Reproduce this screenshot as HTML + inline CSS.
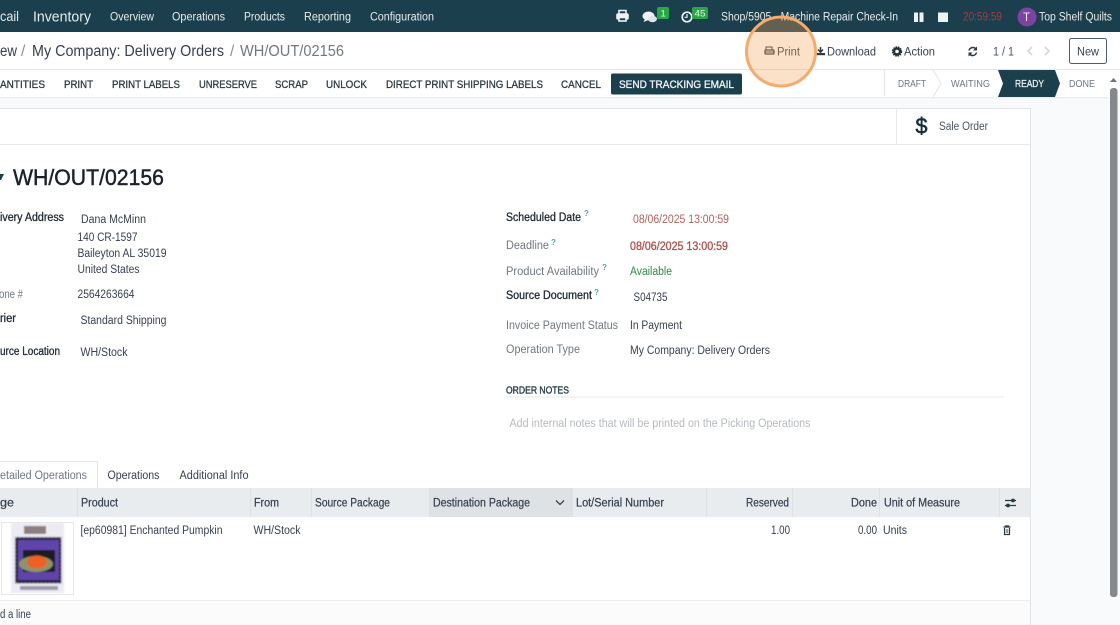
<!DOCTYPE html>
<html><head><meta charset="utf-8"><style>
html,body{margin:0;padding:0;width:1120px;height:625px;overflow:hidden;background:#fff}
svg{display:block;font-family:"Liberation Sans",sans-serif;filter:blur(.3px)}
text{font-size:11.5px;fill:#374151}
.n{fill:#e6ecee}
.b{fill:#2b3a42;stroke:#2b3a42;stroke-width:.3;font-size:11.2px}
.l{fill:#6f7880}
.s{fill:#1f2933;stroke:#1f2933;stroke-width:.3}
.h{fill:#374151;stroke:#374151;stroke-width:.22}
.q{fill:#5aa0ab;font-size:8px;font-weight:bold}
</style></head><body>
<svg width="1120" height="625" viewBox="0 0 1120 625" xmlns="http://www.w3.org/2000/svg">
<defs><filter id="soft" x="-5%" y="-5%" width="110%" height="110%"><feGaussianBlur stdDeviation=".7"/></filter></defs>
<rect width="1120" height="625" fill="#f9fafb"/>
<!-- nav -->
<rect width="1120" height="32" fill="#1b3f4c"/>
<rect y="32" width="1120" height="37" fill="#fff"/>
<rect y="69" width="1120" height="1" fill="#e3e5e8"/>
<rect y="70" width="1120" height="27" fill="#fff"/>
<rect y="97" width="1108" height="1.5" fill="#ebedef"/>
<text class="n" x="0" y="21" textLength="19" lengthAdjust="spacingAndGlyphs" style="font-size:14px">cail</text>
<text class="n" x="33" y="21.500" textLength="58" lengthAdjust="spacingAndGlyphs" style="font-size:14.500px">Inventory</text>
<text class="n" x="110" y="20.500" textLength="44" lengthAdjust="spacingAndGlyphs">Overview</text>
<text class="n" x="172" y="20.500" textLength="53" lengthAdjust="spacingAndGlyphs">Operations</text>
<text class="n" x="244" y="20.500" textLength="41" lengthAdjust="spacingAndGlyphs">Products</text>
<text class="n" x="304" y="20.500" textLength="47" lengthAdjust="spacingAndGlyphs">Reporting</text>
<text class="n" x="370" y="20.500" textLength="64" lengthAdjust="spacingAndGlyphs">Configuration</text>
<!-- systray icons -->
<g fill="none" stroke="#eef2f3" stroke-width="1.600">
<path d="M619 14v-3.500h7v3.500"/>
<rect x="617" y="14" width="11" height="5" rx="1" fill="#eef2f3"/>
<rect x="619" y="17.500" width="7" height="3.500" fill="#1b3f4c"/>
</g>
<ellipse cx="648.500" cy="16" rx="6" ry="4.500" fill="#eef2f3"/>
<ellipse cx="652.500" cy="19" rx="4.500" ry="3.200" fill="#dfe6e8"/>
<path d="M645 19l-1.500 3 4-1.500z" fill="#eef2f3"/>
<rect x="657" y="7" width="12" height="12" rx="2" fill="#28a745"/>
<text x="660.500" y="16.500" style="font-size:9.500px;fill:#dff5e4">1</text>
<circle cx="687" cy="17" r="4.800" fill="none" stroke="#eef2f3" stroke-width="1.700"/>
<path d="M687 14v3.300h-2.400" fill="none" stroke="#eef2f3" stroke-width="1.200"/>
<rect x="692" y="7" width="16" height="12" rx="2" fill="#28a745"/>
<text x="694.500" y="16.500" textLength="11" lengthAdjust="spacingAndGlyphs" style="font-size:9.500px;fill:#dff5e4">45</text>
<text class="n" x="721" y="20.500" textLength="177" lengthAdjust="spacingAndGlyphs">Shop/5905 - Machine Repair Check-In</text>
<rect x="914" y="12.500" width="4" height="9.500" fill="#eef2f3"/><rect x="919.500" y="12.500" width="4" height="9.500" fill="#eef2f3"/>
<rect x="938" y="12.500" width="10" height="9.500" fill="#eef2f3"/>
<text x="963" y="20.500" textLength="39" lengthAdjust="spacingAndGlyphs" style="fill:#a53a42">20:59:59</text>
<circle cx="1027" cy="17" r="9.500" fill="#7c43a3"/>
<text x="1023" y="21" style="font-size:11.500px;fill:#f3eaf7">T</text>
<text class="n" x="1039" y="20.500" textLength="73" lengthAdjust="spacingAndGlyphs">Top Shelf Quilts</text>
<!-- breadcrumb -->
<text x="0" y="56" textLength="17" lengthAdjust="spacingAndGlyphs" style="font-size:15.500px;fill:#374151">ew</text>
<text x="21" y="56" style="font-size:15.500px;fill:#8a929a">/</text>
<text x="32" y="56" textLength="192" lengthAdjust="spacingAndGlyphs" style="font-size:15.500px;fill:#374151">My Company: Delivery Orders</text>
<text x="230" y="56" style="font-size:15.500px;fill:#8a929a">/</text>
<text x="240" y="56" textLength="104" lengthAdjust="spacingAndGlyphs" style="font-size:15.500px;fill:#6f7880">WH/OUT/02156</text>
<!-- control panel right -->
<path d="M820.500 47v5M818 49.500l2.500 2.800 2.500-2.800" stroke="#2b3a42" fill="none" stroke-width="1.500"/><rect x="816" y="53" width="9" height="2.200" fill="#2b3a42"/>
<text x="827" y="55.500" textLength="49" lengthAdjust="spacingAndGlyphs" style="fill:#374151">Download</text>
<circle cx="897" cy="51.500" r="3" fill="none" stroke="#22303a" stroke-width="2.400"/>
<circle cx="897" cy="51.500" r="4.600" fill="none" stroke="#22303a" stroke-width="1.200" stroke-dasharray="1.600 .9"/>
<text x="904" y="55.500" textLength="31" lengthAdjust="spacingAndGlyphs" style="fill:#374151">Action</text>
<path d="M969 50.500a4 4 0 0 1 7-1.500M976.500 52.500a4 4 0 0 1-7 1.500" fill="none" stroke="#2b3a42" stroke-width="1.500"/>
<path d="M977 46.500v4h-4zM968.500 56.500v-4h4z" fill="#2b3a42"/>
<text x="993" y="55.500" textLength="21" lengthAdjust="spacingAndGlyphs" style="fill:#4b5560">1 / 1</text>
<path d="M1032 47l-4 4 4 4M1045 47l4 4-4 4" fill="none" stroke="#d3d7db" stroke-width="1.600"/>
<rect x="1069.500" y="38.500" width="37" height="25" rx="2" fill="#fff" stroke="#4f5f68"/>
<text x="1077" y="55.500" textLength="22" lengthAdjust="spacingAndGlyphs" style="fill:#374151">New</text>
<!-- action buttons -->
<text class="b" x="0" y="88" textLength="45" lengthAdjust="spacingAndGlyphs">ANTITIES</text>
<text class="b" x="64" y="88" textLength="29" lengthAdjust="spacingAndGlyphs">PRINT</text>
<text class="b" x="112" y="88" textLength="68" lengthAdjust="spacingAndGlyphs">PRINT LABELS</text>
<text class="b" x="199" y="88" textLength="58" lengthAdjust="spacingAndGlyphs">UNRESERVE</text>
<text class="b" x="275" y="88" textLength="33" lengthAdjust="spacingAndGlyphs">SCRAP</text>
<text class="b" x="326" y="88" textLength="41" lengthAdjust="spacingAndGlyphs">UNLOCK</text>
<text class="b" x="386" y="88" textLength="157" lengthAdjust="spacingAndGlyphs">DIRECT PRINT SHIPPING LABELS</text>
<text class="b" x="561" y="88" textLength="40" lengthAdjust="spacingAndGlyphs">CANCEL</text>
<rect x="611" y="73.500" width="131" height="21" rx="2" fill="#1b3f4c"/>
<text x="619" y="88" textLength="115" lengthAdjust="spacingAndGlyphs" style="font-size:11.200px;fill:#eef2f3;stroke:#eef2f3;stroke-width:.35">SEND TRACKING EMAIL</text>
<!-- status bar -->
<rect x="884" y="70" width="1" height="26" fill="#e3e5e8"/>
<text x="898" y="87" textLength="28" lengthAdjust="spacingAndGlyphs" style="font-size:10px;fill:#6f7880">DRAFT</text>
<path d="M933 70l8 13.500-8 13.500" fill="none" stroke="#e3e5e8"/>
<text x="951" y="87" textLength="39" lengthAdjust="spacingAndGlyphs" style="font-size:10px;fill:#6f7880">WAITING</text>
<path d="M998 70h57l5 13.500-5 13.500h-57l5-13.500z" fill="#1b3f4c"/>
<text x="1015" y="87" textLength="29" lengthAdjust="spacingAndGlyphs" style="font-size:10px;fill:#eef2f3;stroke:#eef2f3;stroke-width:.25">READY</text>
<text x="1069" y="87" textLength="26" lengthAdjust="spacingAndGlyphs" style="font-size:10px;fill:#6f7880">DONE</text>
<!-- scrollbar -->
<path d="M1110 82l3.500-4 3.500 4z" fill="#6d7378"/>
<rect x="1110" y="88" width="7.500" height="509" rx="3" fill="#85898d"/>
<!-- sheet -->
<rect x="-2" y="108.500" width="1032.500" height="520" fill="#fff" stroke="#e2e5e8"/>
<rect x="0" y="144" width="1030" height="1" fill="#e6e8eb"/>
<rect x="896" y="109" width="1" height="35" fill="#e6e8eb"/>
<text x="915.500" y="133.500" textLength="12" lengthAdjust="spacingAndGlyphs" style="font-size:22px;fill:#16303b;stroke:#16303b;stroke-width:.6">$</text>
<text x="939" y="130" textLength="49" lengthAdjust="spacingAndGlyphs" style="fill:#4b5560">Sale Order</text>
<path d="M-3 174h7l-3 6h-4z" fill="#1b3f4c"/>
<text x="13" y="185" textLength="151" lengthAdjust="spacingAndGlyphs" style="font-size:22px;fill:#1b222a;stroke:#1b222a;stroke-width:.45">WH/OUT/02156</text>
<!-- left fields -->
<text class="s" x="0" y="221" textLength="64" lengthAdjust="spacingAndGlyphs">ivery Address</text>
<text x="81" y="223" textLength="65" lengthAdjust="spacingAndGlyphs">Dana McMinn</text>
<text x="77.500" y="241" textLength="60" lengthAdjust="spacingAndGlyphs">140 CR-1597</text>
<text x="77.500" y="257" textLength="89" lengthAdjust="spacingAndGlyphs">Baileyton AL 35019</text>
<text x="77.500" y="273" textLength="62" lengthAdjust="spacingAndGlyphs">United States</text>
<text class="l" x="-1" y="298" textLength="24" lengthAdjust="spacingAndGlyphs">one #</text>
<text x="77.500" y="298" textLength="57" lengthAdjust="spacingAndGlyphs">2564263664</text>
<text class="s" x="0" y="322" textLength="16" lengthAdjust="spacingAndGlyphs">rier</text>
<text x="80.500" y="324" textLength="86" lengthAdjust="spacingAndGlyphs">Standard Shipping</text>
<text class="s" x="0" y="355" textLength="60" lengthAdjust="spacingAndGlyphs">urce Location</text>
<text x="80.500" y="356" textLength="47" lengthAdjust="spacingAndGlyphs">WH/Stock</text>
<!-- right fields -->
<text class="s" x="506" y="221" textLength="75" lengthAdjust="spacingAndGlyphs">Scheduled Date</text>
<text class="q" x="584" y="216">?</text>
<text x="633" y="223" textLength="96" lengthAdjust="spacingAndGlyphs" style="fill:#b2625f">08/06/2025 13:00:59</text>
<text class="l" x="506" y="249" textLength="43" lengthAdjust="spacingAndGlyphs">Deadline</text>
<text class="q" x="551" y="245">?</text>
<text x="630" y="250" textLength="98" lengthAdjust="spacingAndGlyphs" style="fill:#b04a48;stroke:#b04a48;stroke-width:.28">08/06/2025 13:00:59</text>
<text class="l" x="506" y="275" textLength="93" lengthAdjust="spacingAndGlyphs">Product Availability</text>
<text class="q" x="602" y="270">?</text>
<text x="630" y="275" textLength="42" lengthAdjust="spacingAndGlyphs" style="fill:#2f8a45">Available</text>
<text class="s" x="506" y="299" textLength="86" lengthAdjust="spacingAndGlyphs">Source Document</text>
<text class="q" x="594" y="295">?</text>
<text x="633.500" y="301" textLength="34" lengthAdjust="spacingAndGlyphs">S04735</text>
<text class="l" x="506" y="329" textLength="112" lengthAdjust="spacingAndGlyphs">Invoice Payment Status</text>
<text x="630" y="329" textLength="52" lengthAdjust="spacingAndGlyphs">In Payment</text>
<text class="l" x="506" y="353" textLength="74" lengthAdjust="spacingAndGlyphs">Operation Type</text>
<text x="630" y="354" textLength="140" lengthAdjust="spacingAndGlyphs">My Company: Delivery Orders</text>
<text x="506" y="393.500" textLength="63" lengthAdjust="spacingAndGlyphs" style="font-size:10px;fill:#28404b;stroke:#28404b;stroke-width:.4">ORDER NOTES</text>
<rect x="506" y="396.500" width="498" height="1" fill="#e8eaec"/>
<text x="509.500" y="427" textLength="301" lengthAdjust="spacingAndGlyphs" style="fill:#b5babf">Add internal notes that will be printed on the Picking Operations</text>
<!-- tabs -->
<path d="M-2 461.500h98.500a1 1 0 0 1 1 1v26" fill="#fff" stroke="#e2e5e8"/>
<text class="l" x="0" y="479" textLength="87" lengthAdjust="spacingAndGlyphs">etailed Operations</text>
<text x="107.500" y="479" textLength="52" lengthAdjust="spacingAndGlyphs">Operations</text>
<text x="179.500" y="479" textLength="69" lengthAdjust="spacingAndGlyphs">Additional Info</text>
<!-- table -->
<rect x="0" y="488" width="1030" height="29" fill="#e9ecef"/>
<rect x="430" y="488" width="142" height="29" fill="#dfe2e5"/>
<g fill="#dde1e4">
<rect x="77" y="488" width="1" height="29"/><rect x="250" y="488" width="1" height="29"/><rect x="311" y="488" width="1" height="29"/><rect x="429" y="488" width="1" height="29"/><rect x="572" y="488" width="1" height="29"/><rect x="706" y="488" width="1" height="29"/><rect x="792" y="488" width="1" height="29"/><rect x="879" y="488" width="1" height="29"/><rect x="999" y="488" width="1" height="29"/>
</g>
<text class="h" x="0" y="506.500" textLength="14" lengthAdjust="spacingAndGlyphs">ge</text>
<text class="h" x="81" y="506.500" textLength="37" lengthAdjust="spacingAndGlyphs">Product</text>
<text class="h" x="254" y="506.500" textLength="25" lengthAdjust="spacingAndGlyphs">From</text>
<text class="h" x="315" y="506.500" textLength="75" lengthAdjust="spacingAndGlyphs">Source Package</text>
<text class="h" x="433" y="506.500" textLength="97" lengthAdjust="spacingAndGlyphs">Destination Package</text>
<path d="M556 500.500l4 4 4-4" fill="none" stroke="#374151" stroke-width="1.300"/>
<text class="h" x="576" y="506.500" textLength="88" lengthAdjust="spacingAndGlyphs">Lot/Serial Number</text>
<text class="h" x="746" y="506.500" textLength="43" lengthAdjust="spacingAndGlyphs">Reserved</text>
<text class="h" x="851" y="506.500" textLength="26" lengthAdjust="spacingAndGlyphs">Done</text>
<text class="h" x="884" y="506.500" textLength="76" lengthAdjust="spacingAndGlyphs">Unit of Measure</text>
<g stroke="#2b3a42" stroke-width="1.200" fill="#2b3a42"><path d="M1005 500.500h11M1005 505.500h11"/><circle cx="1013" cy="500.500" r="1.300"/><circle cx="1008" cy="505.500" r="1.300"/></g>
<text x="80.500" y="534" textLength="142" lengthAdjust="spacingAndGlyphs">[ep60981] Enchanted Pumpkin</text>
<text x="253.500" y="534" textLength="47" lengthAdjust="spacingAndGlyphs">WH/Stock</text>
<text x="771" y="534" textLength="19" lengthAdjust="spacingAndGlyphs">1.00</text>
<text x="858" y="534" textLength="19" lengthAdjust="spacingAndGlyphs">0.00</text>
<text x="883" y="534" textLength="24" lengthAdjust="spacingAndGlyphs">Units</text>
<path d="M1003.500 527h7M1005.500 527v-1h3v1M1004.500 528v6.500h5v-6.500" fill="none" stroke="#2b3a42" stroke-width="1.200"/><path d="M1006.200 529v4M1007.800 529v4" stroke="#2b3a42" stroke-width=".6"/>
<!-- product image -->
<rect x="1.500" y="522.500" width="72" height="72" fill="#fff" stroke="#e4e6e8"/>
<g filter="url(#soft)">
<rect x="11" y="523" width="53" height="70" fill="#ecebf2"/>
<rect x="24" y="526" width="22" height="8" fill="#5a4440" opacity=".65"/>
<rect x="15" y="537" width="46.500" height="46.500" fill="#2a2440"/>
<rect x="15" y="537" width="46.500" height="46.500" fill="none" stroke="#c9c8d8" stroke-width="1.300" stroke-dasharray="2 2"/>
<rect x="18" y="540" width="41" height="40" fill="#5f45aa"/>
<rect x="23" y="550" width="32" height="22" fill="#1f1c22"/>
<ellipse cx="36" cy="564" rx="17" ry="8" fill="#8c9468"/>
<ellipse cx="37" cy="562" rx="10" ry="6.500" fill="#ef5f28"/>
<rect x="20" y="586" width="38" height="4" fill="#9a97ab"/>
</g>
<!-- footer row -->
<rect x="0" y="600" width="1030" height="25" fill="#fbfbfb"/>
<rect x="0" y="600" width="1030" height="1" fill="#eceef0"/>
<text x="0" y="618" textLength="31" lengthAdjust="spacingAndGlyphs">d a line</text>
<rect x="1030" y="108" width="1" height="517" fill="#e2e5e8"/>
<!-- print button + highlight -->
<path d="M766 50v-3h6v3" fill="none" stroke="#2b3a42"/><rect x="765" y="50" width="9" height="4" rx=".8" fill="none" stroke="#2b3a42" stroke-width="1.300"/><path d="M765 52h9" stroke="#2b3a42"/>
<text x="777" y="55.500" textLength="23" lengthAdjust="spacingAndGlyphs" style="fill:#374151">Print</text>
<circle cx="781" cy="51.500" r="34.500" fill="#f6a45a" fill-opacity=".33" stroke="#f5ab6b" stroke-width="3"/>
</svg>
</body></html>
